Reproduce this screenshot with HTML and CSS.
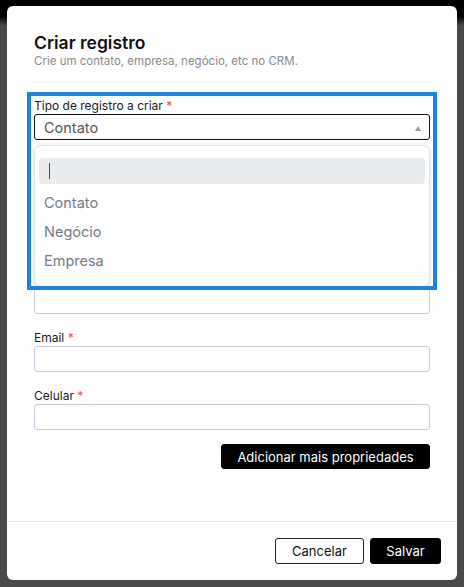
FILE: index.html
```html
<!DOCTYPE html>
<html lang="pt">
<head>
<meta charset="utf-8">
<title>Criar registro</title>
<link rel="stylesheet" href="styles.css">
</head>
<body>
<div class="modal">
  <div class="modal-body">
    <div class="header">
      <h1 class="title">Criar registro</h1>
      <p class="subtitle">Crie um contato, empresa, negócio, etc no CRM.</p>
    </div>
    <div class="form">
      <div class="field field-select">
        <label class="label">Tipo de registro a criar <span class="req">*</span></label>
        <div class="select">
          <span class="select-value">Contato</span>
          <span class="caret"></span>
        </div>
        <div class="menu">
          <div class="menu-search"><span class="cursor"></span></div>
          <div class="option">Contato</div>
          <div class="option">Negócio</div>
          <div class="option">Empresa</div>
        </div>
        <div class="highlight"></div>
      </div>
      <div class="field">
        <div class="label"></div>
        <div class="input"></div>
      </div>
      <div class="field">
        <div class="label"></div>
        <div class="input"></div>
      </div>
      <div class="field">
        <div class="label"></div>
        <div class="input"></div>
      </div>
      <div class="field">
        <label class="label">Email <span class="req">*</span></label>
        <div class="input"></div>
      </div>
      <div class="field">
        <label class="label">Celular <span class="req">*</span></label>
        <div class="input"></div>
      </div>
      <div class="more-row">
        <button class="btn btn-dark btn-more">Adicionar mais propriedades</button>
      </div>
    </div>
  </div>
  <div class="footer">
    <button class="btn btn-outline">Cancelar</button>
    <button class="btn btn-dark btn-save">Salvar</button>
  </div>
</div>
</body>
</html>
```
FILE: styles.css
```css
* { box-sizing: border-box; }
html, body { margin: 0; padding: 0; }
body {
  width: 464px;
  height: 587px;
  overflow: hidden;
  background: linear-gradient(#000 0, #000 16px, #4a4a4a 26px, #4a4a4a 100%);
  font-family: Inter, "Noto Sans", sans-serif;
  color: #1a1a1a;
  padding: 6px 7px 7px 7px;
}
.modal {
  background: #fff;
  border-radius: 6px;
  height: 574px;
  display: flex;
  flex-direction: column;
}
.modal-body {
  flex: 1;
  padding: 27px 27px 0 27px;
}
.header {
  padding-bottom: 14px;
  border-bottom: 1px solid #eeeeee;
  margin-bottom: 11px;
}
.title {
  margin: 0;
  font-size: 17.5px;
  font-weight: 600;
  line-height: 20px;
  color: #111;
}
.subtitle {
  margin: 1px 0 0 0;
  font-size: 11.5px;
  line-height: 14px;
  color: #8a8a8a;
}
.form { display: flex; flex-direction: column; }
.field { display: flex; flex-direction: column; margin-bottom: 12px; }
.field-select { position: relative; }
.label {
  font-size: 12px;
  line-height: 16px;
  height: 16px;
  margin-top: 4px;
  margin-bottom: 0;
  color: #1a1a1a;
}
.req { color: #f05050; }
.input {
  height: 26px;
  border: 1px solid #cbc7dc;
  border-radius: 3px;
  background: #fff;
}
.select {
  height: 26px;
  border: 1px solid #111;
  border-radius: 3px;
  display: flex;
  align-items: center;
  justify-content: space-between;
  padding: 0 8px 0 9px;
}
.select-value { font-size: 14.5px; color: #555; }
.caret {
  width: 0; height: 0;
  border-left: 3.5px solid transparent;
  border-right: 3.5px solid transparent;
  border-bottom: 5px solid #999;
  margin-top: 3px;
}
.menu {
  position: absolute;
  left: 0; right: 0;
  top: 51px;
  height: 142px;
  background: #fff;
  border: 1px solid #e2e2e2;
  border-radius: 7px;
  box-shadow: 0 1px 4px rgba(0,0,0,0.15);
  padding: 12px 4px 0 4px;
  z-index: 2;
}
.menu-search {
  height: 26px;
  background: #e9ecef;
  border-radius: 4px;
  display: flex;
  align-items: center;
  padding-left: 10px;
  margin-bottom: 4px;
}
.cursor { width: 1px; height: 16px; background: #444; }
.option {
  font-size: 14.5px;
  line-height: 29px;
  height: 29px;
  padding-left: 5px;
  color: #747a88;
}
.highlight {
  position: absolute;
  left: -7px; right: -7px;
  top: -2px;
  height: 198px;
  border: 4px solid #1a85de;
  z-index: 3;
  pointer-events: none;
}
.more-row { display: flex; justify-content: flex-end; margin-top: 2px; }
.btn {
  font-family: inherit;
  font-size: 13px;
  border-radius: 3px;
  height: 26px;
  padding: 0;
  cursor: pointer;
}
.btn-dark { background: #000; color: #fff; border: 1px solid #000; }
.btn-more { width: 209px; height: 25px; }
.footer {
  border-top: 1px solid #e4e4e4;
  padding: 16px 16px 16px 0;
  display: flex;
  justify-content: flex-end;
  gap: 6px;
}
.btn-outline { background: #fff; color: #111; border: 1px solid #222; width: 89px; }
.btn-save { width: 71px; }
```
